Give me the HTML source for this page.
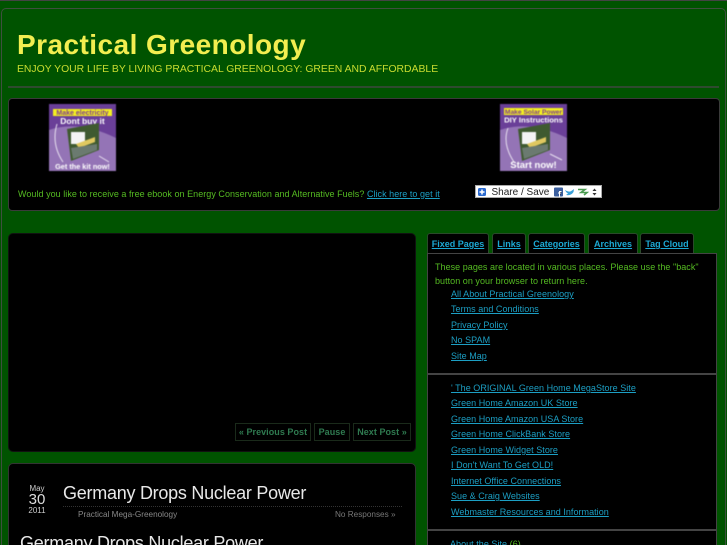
<!DOCTYPE html>
<html><head><meta charset="utf-8"><style>
html,body{margin:0;padding:0;width:727px;height:545px;overflow:hidden;background:#005500}
#w{position:relative;width:727px;height:545px;overflow:hidden;background:#005300;font-family:"Liberation Sans",sans-serif;filter:blur(.3px)}
.a{position:absolute;white-space:nowrap}
.box{position:absolute;background:#000;border:1px solid #333;box-sizing:border-box}
.l{color:#1c9fc4;text-decoration:underline}
.s{font-size:9px;line-height:12px;letter-spacing:.04px}
.g{color:#55bb22}
.tab{position:absolute;top:233px;height:21px;background:#000;border:1px solid #2a4a2a;border-bottom:0;border-radius:3px 3px 0 0;box-sizing:border-box;font-size:9px;font-weight:bold;line-height:20px;text-align:center;color:#1ca9d4;text-decoration:underline}
.btn{position:absolute;top:423px;height:18px;border:1px solid #1a2a1a;box-sizing:border-box;font-size:9px;font-weight:bold;line-height:16px;text-align:center;color:#2f7a50;letter-spacing:.05px}
svg text{font-family:"Liberation Sans",sans-serif;font-weight:bold;text-anchor:middle}
.th{filter:blur(.4px)}
</style></head><body><div id="w">
<div class="a" style="left:0;top:0;width:727px;height:1px;background:#444"></div>
<div class="a" style="left:1px;top:8px;width:725px;height:560px;border:1px solid #3f4f3f;border-radius:5px;box-sizing:border-box"></div>
<div class="a" style="left:17px;top:28px;font-size:28px;line-height:34px;font-weight:bold;color:#f2ee50;letter-spacing:.45px">Practical Greenology</div>
<div class="a" style="left:17px;top:63px;font-size:10.4px;line-height:14px;color:#c8dc30">ENJOY YOUR LIFE BY LIVING PRACTICAL GREENOLOGY: GREEN AND AFFORDABLE</div>
<div class="a" style="left:8px;top:86px;width:711px;height:2px;background:#2f4a2f"></div>

<div class="box" style="left:8px;top:98px;width:712px;height:113px;border-radius:4px;border-color:#3a3a3a"></div>
<svg class="a th" style="left:49px;top:104px" width="67" height="67" viewBox="0 0 67 67"><rect width="67" height="67" fill="#6a3f98"/><path d="M0 26Q30 16 67 34V67H0Z" fill="#9474b6"/><path d="M8 20Q2 40 14 58" stroke="#e8e0f0" fill="none"/><path d="M50 52L60 58" stroke="#e8e0f0" fill="none"/><rect x="4" y="5" width="59" height="7" fill="#f4f020"/><text x="33.500" y="10.800" font-size="7" fill="#7a3a90">Make electricity</text><text x="33.500" y="20" font-size="8.500" fill="#fff">Dont buy it</text><path d="M18 25L50 19V46L22 57Z" fill="#3f5a30"/><rect x="22" y="28" width="14" height="12" fill="#f4f4f4"/><path d="M27 40L46 33V38L30 44Z" fill="#e0c860"/><path d="M22 44L48 40V46L24 55Z" fill="#6b7a70"/><text x="33.500" y="65" font-size="7.300" fill="#fff">Get the kit now!</text></svg>
<svg class="a th" style="left:500px;top:104px" width="67" height="67" viewBox="0 0 67 67"><rect width="67" height="67" fill="#6a3f98"/><path d="M0 26Q30 16 67 34V67H0Z" fill="#9474b6"/><path d="M8 24Q2 40 14 58" stroke="#e8e0f0" fill="none"/><path d="M50 50L62 56" stroke="#e8e0f0" fill="none"/><rect x="4" y="4" width="59" height="7" fill="#f4f020"/><text x="33.500" y="9.800" font-size="6.700" fill="#7a3a90">Make Solar Power</text><text x="33.500" y="18.500" font-size="7.700" fill="#fff">DIY Instructions</text><path d="M18 25L50 19V46L22 57Z" fill="#3f5a30"/><rect x="22" y="28" width="14" height="12" fill="#f4f4f4"/><path d="M27 40L46 33V38L30 44Z" fill="#e0c860"/><path d="M22 44L48 40V46L24 55Z" fill="#6b7a70"/><text x="33.500" y="64" font-size="9.500" fill="#fff">Start now!</text></svg>
<div class="a s g" style="left:18px;top:188px">Would you like to receive a free ebook on Energy Conservation and Alternative Fuels? <span class="l">Click here to get it</span></div>
<div class="a" style="left:475px;top:185px;width:127px;height:13px;background:#fff;border:1px solid #aaa;box-sizing:border-box"></div>
<svg class="a" style="left:478px;top:187px" width="122" height="10" viewBox="0 0 122 10"><rect x="0" y="1" width="8" height="8" rx="1.500" fill="#2a6ad0"/><path d="M4 2.500V7.500M1.500 5H6.500" stroke="#fff" stroke-width="1.500"/><rect x="76" y="0.500" width="9" height="9" rx="1" fill="#3b5f9e"/><path d="M81.500 9.500V4.500H83.500M80 6H83" stroke="#fff"/><path d="M87 3Q91 6 94 3.500L96 2L95.500 5Q93 9 88 8L90 6.500Q88 5.500 87 3Z" fill="#3aa0d8"/><path d="M100 2.500H107L103 5.500H109L106 8" stroke="#4a9a50" stroke-width="1.600" fill="none"/><path d="M114.500 4L116.500 1.500L118.500 4ZM114.500 6L116.500 8.500L118.500 6Z" fill="#333"/></svg>
<div class="a" style="left:491.500px;top:185.500px;font-size:10px;line-height:13px;color:#222">Share / Save</div>

<div class="box" style="left:8px;top:233px;width:408px;height:219px;border-radius:5px;border-color:#111"></div>
<div class="btn" style="left:235px;width:76px">« Previous Post</div>
<div class="btn" style="left:314px;width:36px">Pause</div>
<div class="btn" style="left:353px;width:58px">Next Post »</div>

<div class="box" style="left:8px;top:463px;width:408px;height:100px;border-radius:5px"></div>
<div class="a" style="left:17px;top:483px;width:40px;text-align:center;font-size:8px;line-height:11px;color:#ccc">May</div>
<div class="a" style="left:17px;top:491px;width:40px;text-align:center;font-size:15px;line-height:18px;color:#ddd">30</div>
<div class="a" style="left:17px;top:505px;width:40px;text-align:center;font-size:8px;line-height:11px;color:#ccc">2011</div>
<div class="a" style="left:63px;top:482px;font-size:18px;line-height:23px;color:#e8e8e8;letter-spacing:-.26px">Germany Drops Nuclear Power</div>
<div class="a" style="left:63px;top:506px;width:339px;border-top:1px dotted #333"></div>
<div class="a" style="left:78px;top:509px;font-size:8.200px;line-height:12px;color:#888">Practical Mega-Greenology</div>
<div class="a" style="left:335px;top:509px;font-size:8.200px;line-height:12px;color:#777">No Responses »</div>
<div class="a" style="left:20px;top:532px;font-size:18px;line-height:23px;color:#e8e8e8;letter-spacing:-.26px">Germany Drops Nuclear Power</div>

<div class="tab" style="left:427px;width:62px">Fixed Pages</div>
<div class="tab" style="left:492px;width:34px">Links</div>
<div class="tab" style="left:528px;width:57px">Categories</div>
<div class="tab" style="left:588px;width:50px">Archives</div>
<div class="tab" style="left:640px;width:54px">Tag Cloud</div>

<div class="box" style="left:427px;top:253px;width:290px;height:310px;border:1px solid #444"></div>
<div class="a" style="left:427px;top:373px;width:290px;height:2px;background:#444"></div>
<div class="a" style="left:427px;top:529px;width:290px;height:2px;background:#444"></div>

<div class="a s g" style="left:435px;top:261px;line-height:13.500px">These pages are located in various places. Please use the "back"<br>button on your browser to return here.</div>
<div class="a s l" style="left:451px;top:288px">All About Practical Greenology</div>
<div class="a s l" style="left:451px;top:303px">Terms and Conditions</div>
<div class="a s l" style="left:451px;top:319px">Privacy Policy</div>
<div class="a s l" style="left:451px;top:334px">No SPAM</div>
<div class="a s l" style="left:451px;top:350px">Site Map</div>

<div class="a s l" style="left:451px;top:382px">' The ORIGINAL Green Home MegaStore Site</div>
<div class="a s l" style="left:451px;top:397px">Green Home Amazon UK Store</div>
<div class="a s l" style="left:451px;top:413px">Green Home Amazon USA Store</div>
<div class="a s l" style="left:451px;top:428px">Green Home ClickBank Store</div>
<div class="a s l" style="left:451px;top:444px">Green Home Widget Store</div>
<div class="a s l" style="left:451px;top:459px">I Don't Want To Get OLD!</div>
<div class="a s l" style="left:451px;top:475px">Internet Office Connections</div>
<div class="a s l" style="left:451px;top:490px">Sue &amp; Craig Websites</div>
<div class="a s l" style="left:451px;top:506px">Webmaster Resources and Information</div>
<div class="a s" style="left:450px;top:538px"><span class="l">About the Site</span> <span class="g">(6)</span></div>
</div></body></html>
